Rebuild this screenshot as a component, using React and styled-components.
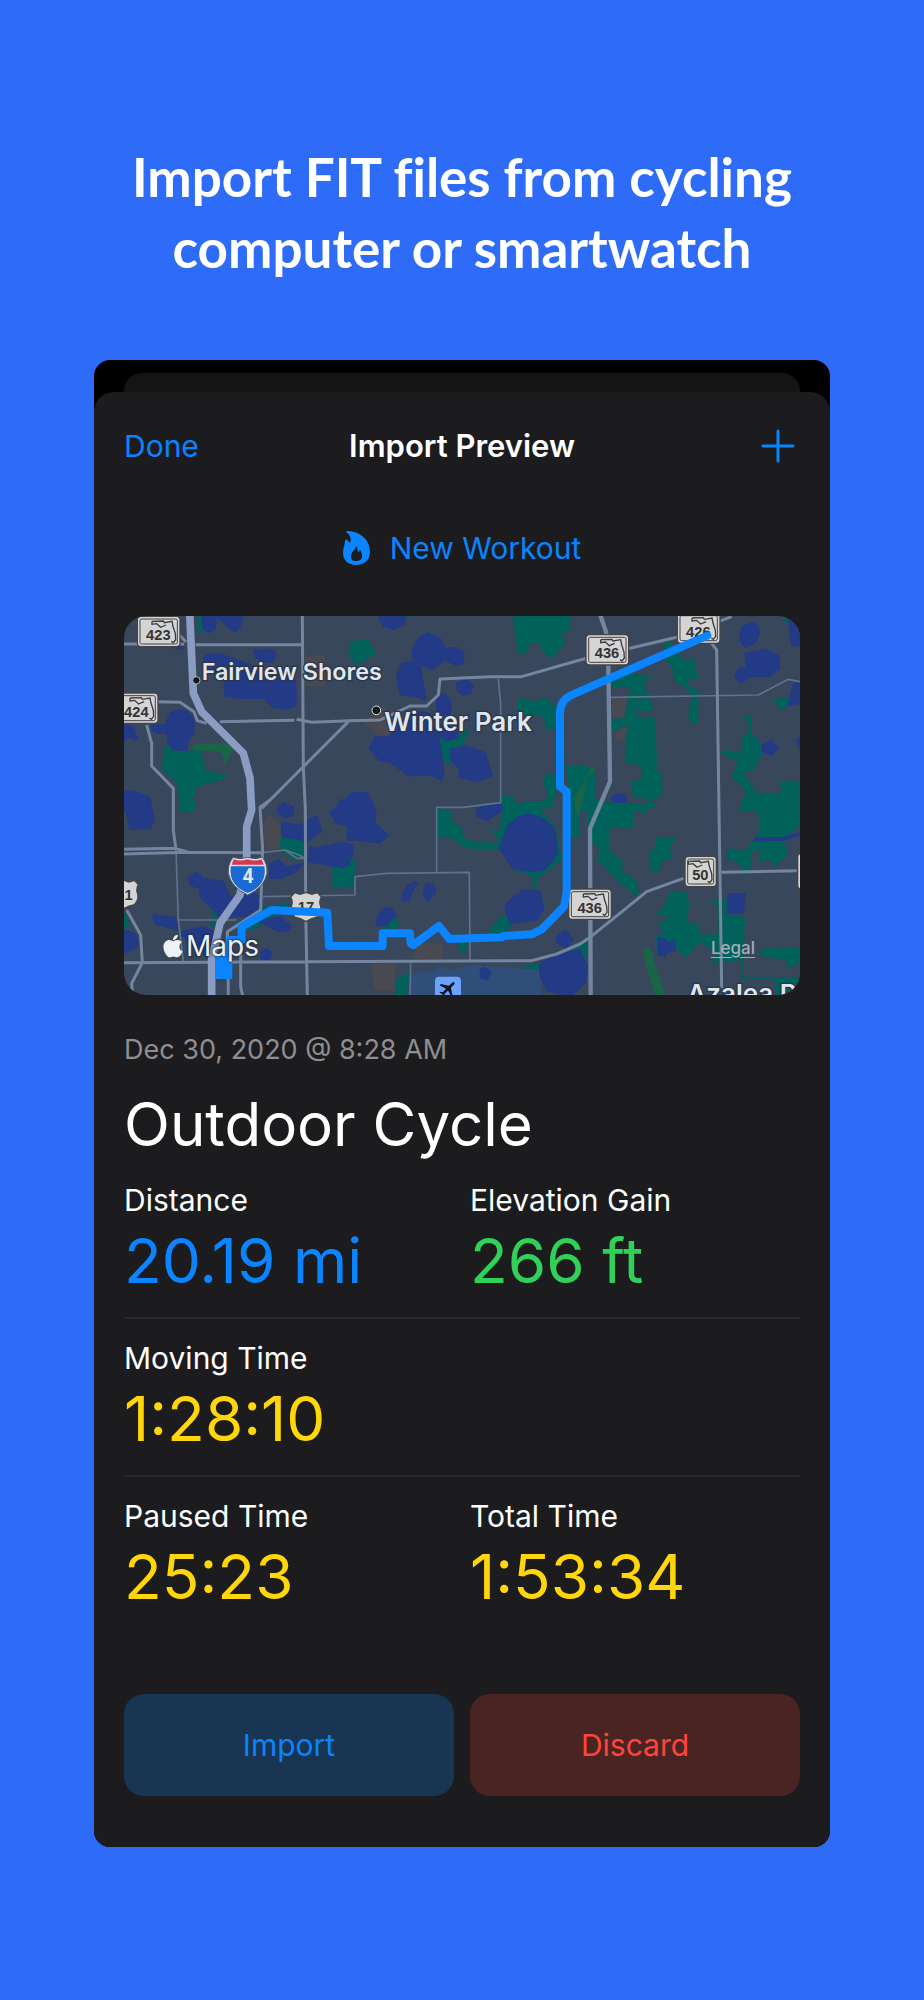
import React from "react";
import styled, { createGlobalStyle } from "styled-components";
import { FaApple } from "react-icons/fa";
import { MdFlight } from "react-icons/md";

const GlobalStyle = createGlobalStyle`
  * {
    box-sizing: border-box;
  }
  body {
    margin: 0;
    background: #2e6cf7;
    font-family: Inter, "Liberation Sans", sans-serif;
    color: #ffffff;
  }
`;

const Page = styled.main`
  display: flex;
  flex-direction: column;
  align-items: center;
  padding: 141px 94px 153px;
`;

const Headline = styled.h1`
  max-width: 700px;
  margin: 0 0 77px;
  font-family: Lato, "Liberation Sans", sans-serif;
  font-size: 53px;
  font-weight: 700;
  font-variant-ligatures: none;
  line-height: 71px;
  text-align: center;
`;

const Phone = styled.section`
  width: 100%;
  padding-top: 13px;
  border-radius: 16px;
  background: #000000;
  overflow: hidden;
`;

const BackSheet = styled.div`
  height: 19px;
  margin: 0 30px;
  border-radius: 18px 18px 0 0;
  background: #141415;
`;

const Sheet = styled.div`
  padding: 0 30px 51px;
  border-radius: 20px 20px 0 0;
  background: #1c1c1e;
`;

const NavBar = styled.header`
  display: grid;
  grid-template-columns: 1fr auto 1fr;
  align-items: center;
  height: 108px;
`;

const NavTitle = styled.h2`
  margin: 0;
  font-size: 31px;
  font-weight: 600;
  line-height: 40px;
`;

const TextButton = styled.button`
  display: flex;
  align-items: center;
  gap: 20px;
  justify-self: ${(props) => props.$side || "center"};
  padding: ${(props) => (props.$side === "end" ? "0 5px" : "0")};
  border: 0;
  background: none;
  color: #0a84ff;
  font: inherit;
  font-size: 30px;
  line-height: 40px;
  cursor: pointer;
`;

const WorkoutRow = styled.div`
  display: flex;
  justify-content: center;
  padding: 28px 0 48px;
`;

const MapCard = styled.div`
  position: relative;
  border-radius: 22px;
  background: #38475b;
  overflow: hidden;
`;

const MapCanvas = styled.svg`
  display: block;
  width: 100%;
  height: auto;
`;

const MapBrand = styled.span`
  position: absolute;
  left: 36px;
  bottom: 31px;
  display: flex;
  align-items: center;
  font-size: 28px;
  line-height: 36px;
  color: #eef1f5;
  text-shadow: 0 0 3px #1c2430, 0 0 2px #1c2430;
`;

const LegalLink = styled.a`
  position: absolute;
  right: 45px;
  bottom: 36px;
  font-size: 17px;
  font-weight: 500;
  line-height: 22px;
  color: #a3adba;
  text-decoration: underline;
  text-underline-offset: 3px;
`;

const DateLine = styled.p`
  margin: 37px 0 0;
  font-size: 27px;
  line-height: 36px;
  color: #8e8e93;
`;

const WorkoutTitle = styled.h3`
  margin: 18px 0 0;
  font-size: 60px;
  font-weight: 400;
  line-height: 76px;
`;

const Stats = styled.dl`
  margin: 18px 0 0;
`;

const StatRow = styled.div`
  display: grid;
  grid-template-columns: 1fr 1fr;
  column-gap: 16px;
  padding-bottom: 18px;
  margin-bottom: 19px;
  border-bottom: 2px solid ${(props) => (props.$last ? "transparent" : "#29292c")};
`;

const StatLabel = styled.dt`
  font-size: 30px;
  line-height: 40px;
`;

const StatValue = styled.dd`
  margin: 3px 0 0;
  font-size: 62px;
  line-height: 76px;
  color: ${(props) => props.$color};
`;

const Actions = styled.div`
  display: grid;
  grid-template-columns: 1fr 1fr;
  gap: 16px;
  padding-top: 40px;
`;

const ActionButton = styled.button`
  height: 102px;
  border: 0;
  border-radius: 20px;
  background: ${(props) => (props.$danger ? "#492423" : "#183553")};
  color: ${(props) => (props.$danger ? "#ff453a" : "#0a84ff")};
  font: inherit;
  font-size: 30px;
  cursor: pointer;
`;

const tiles = [
  {
    x: -12,
    y: -18,
    parks:
      "M232,18L250,18 252,62 232,70ZM285,18L297,18 293,40ZM135,405L175,425 220,420 240,415 260,485 318,490 318,505 232,530 222,560 228,602 180,602 172,520 125,480Z",
    woods: "M222,400L320,400 342,418 312,468 310,440 300,425 240,422 222,420Z",
    built: "M555,138H615V228H555Z",
    water:
      "M248,18L290,18 285,60 265,68 248,55ZM292,18L370,18 360,50 345,64 320,48ZM158,112L185,110 188,119 170,117ZM250,142C275,125 300,130 330,142L380,160 450,190 525,208 530,265 525,290 500,298 460,292 430,265 370,265 315,258 312,190 265,188ZM402,120L425,122 450,116 467,130 460,155 430,158 405,140ZM150,310C180,290 210,300 222,330L222,370 205,390 200,420 160,420 145,400 140,370 110,370 95,360 95,345 135,345ZM12,345L40,350 52,390 25,382 12,392ZM12,545C40,538 75,550 88,580L95,605H12Z",
  },
  {
    x: 648,
    y: -18,
    parks:
      "M30,95L82,86 110,130 50,165 26,140ZM520,18L692,18 690,65 660,70 677,98 632,147 605,120 600,98 568,98 562,130 532,132ZM540,262L580,275 615,262 650,290 650,355 620,358 610,320 545,315 530,290ZM290,380L350,385 392,345 370,405 340,410 335,455 318,463 300,420ZM195,18L215,18 205,24ZM622,485L645,500 650,545 640,575 600,602 490,602 480,560 518,555 522,580 610,572 625,555 608,515ZM678,468H740V598H690Z",
    woods: "",
    built: "M70,340L130,280 150,320 200,340 205,370 155,385 115,375Z",
    water:
      "M115,18L198,18 192,45 160,58 130,48ZM235,85L262,68 300,85 318,115 350,112 372,130 370,160 350,166 315,150 275,180 255,168 220,150 217,120ZM185,160L210,155 240,160 248,210 258,270 235,262 180,252 170,195ZM350,218L380,208 400,226 392,250 370,256 352,243ZM290,255L315,252 333,277 330,317 290,317ZM170,340L235,305 270,310 285,350 300,400 312,490 305,510 270,495 205,497 150,455 118,450 88,415 105,382 150,378ZM330,420L375,408 435,428 457,498 405,515 355,500 360,475 335,455ZM290,340L355,350 350,385 320,392 295,375ZM-14,595L40,548 80,548 108,605 0,640Z",
  },
  {
    x: 1338,
    y: -18,
    parks:
      "M280,98L300,95 340,150 372,145 385,208 350,208 360,232 385,240 385,340 370,345 355,325 358,285 370,260 340,228 315,215 305,170 280,140ZM125,205L180,190 245,198 220,220 248,285 245,307 190,300 205,320 253,322 262,460 265,488 285,488 272,500 280,545 255,570 190,562 185,515 215,505 212,465 168,460 165,380 180,345 125,365 125,330 165,320 180,230 125,235ZM608,270L628,260 658,265 653,288 630,298ZM515,318L543,315 545,370 570,395 575,435 550,482 520,488 528,500 560,548H632V515H690V605H507L528,545 485,500 505,455 470,440 450,430 470,418 512,430 515,385 535,365 535,335ZM0,468L77,475 75,560 90,575 180,578 220,585 240,570 260,590 200,605 0,605ZM637,18L652,18 650,45Z",
    woods: "M66,470H77V485L50,500 36,590 14,590 14,560Z",
    built: "M125,265L172,265 160,330 127,318ZM148,343L175,355 165,392 132,390Z",
    water:
      "M515,50L550,35 570,60 560,95 525,112 508,90ZM525,130L590,118 628,140 628,175 600,198 540,200 515,218 495,200 505,175 530,172ZM655,25H690V110L665,105ZM670,222L690,218V280L655,285ZM575,408L600,391 625,413 605,435 580,427ZM678,390L690,380V418ZM122,565L145,550 170,560 168,575 140,577Z",
  },
  {
    x: -12,
    y: 552,
    parks:
      "M180,0L225,0 210,38 178,35ZM480,115L550,112 565,175 520,180 480,150ZM637,195H697V263H637ZM12,330L30,370 12,392ZM262,300L300,290 320,340 280,355ZM265,372L292,358 290,385ZM430,320L500,310 510,320 400,390 380,385Z",
    woods: "",
    built: "M430,75L448,38 480,80 485,120 475,150 440,148 430,120Z",
    water:
      "M15,-24L88,-10 103,60 90,85 30,88 20,40ZM470,30L490,8 520,20 520,45 495,55ZM485,68L540,75 590,48 605,95 560,125 520,115 485,110ZM630,40L660,10 700,0V75L650,70ZM570,140L600,148 680,130 690,195 650,200 600,190 565,185ZM450,190L475,180 500,200 550,190 530,215 480,235 450,235ZM205,235L230,215 250,235 310,245 330,290 400,275 420,290 415,340 370,350 300,350 270,320 240,290 240,265 210,255ZM98,345L165,352 175,390 105,372ZM12,390L45,400 55,425 50,440 12,460ZM180,395L250,380 290,400 260,470 200,420ZM420,365L480,350 515,380 500,395 475,395ZM420,460L438,445 455,457 450,480 425,480Z",
  },
  {
    x: 648,
    y: 552,
    parks:
      "M293,25L330,28 335,60 370,90 375,120 475,130 470,105 445,90 480,92 485,40 490,-5 522,-5 530,18 600,5 640,0 640,20 600,28 620,48 650,90 665,180 600,230 592,232 590,268 578,268 578,230 520,208 480,150 375,145 335,115 293,112ZM440,400L485,345 520,370 495,400ZM130,388L165,335 178,385ZM355,425L385,425 375,460 360,455ZM5,178H47V264H-10ZM550,500L610,485 600,515 555,515ZM165,540L210,515 200,585 165,585ZM688,40L720,20V110L695,115Z",
    woods: "",
    built: "M235,430L310,430 308,478 215,475ZM95,490H165V575L100,570Z",
    water:
      "M0,0L95,0 107,40 105,70 145,105 120,130 50,120 22,120 22,75 0,72ZM-90,150L0,128 38,135 38,165 10,205 -5,195ZM410,25L480,5 488,30 440,62 412,50ZM505,75L535,50 565,42 610,55 645,90 653,160 615,208 580,215 520,205 478,145ZM500,310L550,270 600,275 612,325 590,360 510,370 495,330ZM258,250L280,255 288,275 265,305 250,285ZM185,285L205,255 225,245 233,252 215,275 210,298 190,302ZM107,365L125,330 150,322 168,345 140,375 115,378ZM650,410L675,390 700,418 678,443 650,428ZM600,490L650,465 720,450 742,500 735,550 690,590 620,570 600,525ZM420,510L435,502 452,514 442,539 424,534Z",
  },
  {
    x: 1338,
    y: 552,
    parks:
      "M50,30L190,10 190,85 130,80 118,90 118,150 160,185 155,215 200,240 208,295 140,240 80,180 90,150 60,120ZM190,15L250,5 250,18 232,25 225,48 208,28ZM255,112H322L300,145 305,175 272,185 270,215 238,210 238,150 255,148ZM510,5L545,-20H690V80L660,95 660,125 640,125 655,160 620,200 600,180 560,185 575,150 545,155 540,225 515,225 512,195 465,170 480,145 530,150 550,120 570,95 565,40ZM300,275L350,275 358,315 350,365 390,375 388,430 345,475 320,445 260,460 258,410 275,400 270,370 300,350 258,345 285,315ZM405,305L470,295 470,345 525,350 520,480 425,490 440,460 390,425 385,405 445,400 445,310ZM565,455L600,440 640,445 690,440V490L650,505 650,480 580,470ZM515,480H522V533H690V585H620L615,540H515ZM0,440L55,420 50,475 30,470Z",
    woods: "M220,445L240,442 285,585 255,585 225,490ZM14,0H36L28,45 14,30Z",
    built: "",
    water:
      "M475,282H525L520,340H472ZM265,412L285,417 290,427 315,422V452L290,457 285,469 265,464ZM555,115L640,112 690,98V105L640,120 555,122ZM130,0H165V6H130Z",
  },
];

const highway =
  "M197,-10L208,232 233,287 358,412 378,487 383,582 368,632 368,722 348,837 288,922 263,1032 263,1150";

const mainRoads = [
  "M0,84H180",
  "M215,86H535",
  "M150,40L186,78",
  "M535,0L538,452 544,582 545,882 550,1140",
  "M98,257L168,259 210,287 220,314 248,322",
  "M288,317L511,313",
  "M518,310L563,319 678,314 768,312 858,270 908,270 943,237 948,189 1098,182 1193,182 1368,132 1658,64 1823,2",
  "M673,317L413,577",
  "M438,552L408,574 416,702 410,882 310,947 313,1140",
  "M68,327L83,382 83,450 148,517 148,642 156,702",
  "M0,700L153,697 198,710",
  "M0,714L188,709 413,710",
  "M0,1040L1223,1034 1298,1014 1368,984 1398,964 1568,827 1678,787",
  "M1793,769L2018,764",
  "M8,882L50,957 55,1040 23,1102 26,1140",
  "M350,952L350,1112 356,1140",
  "M1763,82L1778,102 1785,582 1793,1117",
];

const thinRoads = [
  "M156,702L163,912 178,1037",
  "M163,912H338",
  "M413,710L483,702 518,727 543,727",
  "M483,702L520,715 543,727",
  "M418,842L693,837 693,782 788,772 1036,769 1038,1032",
  "M1123,189L1130,262 1130,560 1018,574 938,574 938,770",
  "M1458,244L1903,237 1993,190 2028,197",
  "M860,1042L858,1140",
];

const route =
  "M1750,59L1345,236Q1308,252 1308,292L1308,512 1328,527 1328,827 1320,872 1253,940 1223,955 1138,960 1133,964 976,969 945,930 868,987 860,982 858,952 776,952 776,990 615,990 610,890 443,882 353,932 353,972 318,972 300,1030";

const MapLabel = styled.text`
  font-family: Inter, "Liberation Sans", sans-serif;
  font-weight: 600;
  fill: #dfe6ef;
  stroke: #2b3647;
  stroke-width: 8px;
  paint-order: stroke;
`;

const ShieldNumber = styled.text`
  font-family: "Liberation Sans Narrow", "Liberation Sans", sans-serif;
  font-size: 44px;
  font-weight: 700;
  text-anchor: middle;
  fill: #333333;
`;

function StateShield({ x, y, number, width = 132 }) {
  return (
    <g transform={`translate(${x} ${y})`}>
      <rect width={width} height="95" rx="13" fill="#444444" />
      <rect x="4" y="4" width={width - 8} height="87" rx="9" fill="#d4d4d4" />
      <rect
        x="10"
        y="10"
        width={width - 20}
        height="75"
        rx="5"
        fill="none"
        stroke="#444444"
        strokeWidth="3"
      />
      <path
        transform={`translate(${width - 132} 0)`}
        d="M46,17L80,16 83,21 106,17 109,32 116,54 117,72 110,81 104,77M46,17V26L60,24 72,35 88,28"
        fill="none"
        stroke="#3c3c3c"
        strokeWidth="4"
      />
      <ShieldNumber x={width / 2 - 1} y="73">
        {number}
      </ShieldNumber>
    </g>
  );
}

function UsShield({ x, y, number, numberX = 48 }) {
  return (
    <g transform={`translate(${x} ${y})`}>
      <path
        d="M14,3L30,8 48,2 66,8 82,3 94,16Q86,30 92,44 96,62 82,76 62,80 48,90 34,80 14,76 0,62 4,44 10,30 2,16Z"
        fill="#d4d4d4"
        stroke="#444444"
        strokeWidth="4"
      />
      <ShieldNumber x={numberX} y="61">
        {number}
      </ShieldNumber>
    </g>
  );
}

function InterstateShield() {
  return (
    <g transform="translate(313 722)">
      <path
        d="M14,2Q36,10 58,2 80,10 102,2 118,22 116,50 108,92 58,115 8,92 0,50 -2,22 14,2Z"
        fill="#d8dde6"
        stroke="#4c5878"
        strokeWidth="3"
      />
      <path d="M16,8Q36,15 58,8 80,15 100,8L106,24H10Z" fill="#d5394c" />
      <path d="M8,29H108Q112,50 104,70 92,96 58,109 24,96 12,70 4,50 8,29Z" fill="#1a6ad4" />
      <text
        x="59"
        y="79"
        textAnchor="middle"
        fontFamily="Roboto, sans-serif"
        fontSize="58"
        fontWeight="700"
        fill="#e3e6ea"
      >
        4
      </text>
    </g>
  );
}

function RouteMap() {
  return (
    <MapCard>
      <MapCanvas viewBox="0 0 2028 1137" role="img" aria-label="Route map">
        {tiles.map((tile, index) => (
          <g key={index} transform={`translate(${tile.x} ${tile.y})`}>
            <path d={tile.built} fill="#494951" />
            <path d={tile.parks} fill="#00625a" />
            <path d={tile.woods} fill="#1a6548" />
          </g>
        ))}
        <path
          d="M863,1072L938,1062 943,1047 973,1062 1048,1047 1123,1052 1250,1062V1140H858Z"
          fill="#304e7a"
        />
        {tiles.map((tile, index) => (
          <path
            key={index}
            transform={`translate(${tile.x} ${tile.y})`}
            d={tile.water}
            fill="#233a87"
            stroke="#233a87"
            strokeWidth="4"
            strokeLinejoin="round"
          />
        ))}
        <g fill="none" strokeLinejoin="round">
          <path d={thinRoads.join("")} stroke="#60718a" strokeWidth="5" />
          <path d={mainRoads.join("")} stroke="#74869f" strokeWidth="9" />
          <path
            d="M1428,-5L1446,47 1453,152 1458,497 1398,637 1400,1140"
            stroke="#74869f"
            strokeWidth="13"
          />
          <path d={highway} stroke="#8a9cc2" strokeWidth="23" />
        </g>
        <StateShield x={38} y={-1} number="423" />
        <StateShield x={-28} y={229} number="424" />
        <StateShield x={1384} y={54} number="436" />
        <StateShield x={1658} y={-11} number="426" />
        <StateShield x={1332} y={817} number="436" />
        <StateShield x={1681} y={719} number="50" width={98} />
        <rect x="2021" y="712" width="90" height="108" rx="12" fill="#d4d4d4" stroke="#444444" strokeWidth="4" />
        <UsShield x={-51} y={790} number="1" numberX={65} />
        <UsShield x={498} y={827} number="17" />
        <InterstateShield />
        <rect x="933" y="1082" width="78" height="78" rx="12" fill="#6ba1ff" />
        <g transform="rotate(45 973 1119)">
          <MdFlight x="941" y="1087" size="64" color="#11151c" />
        </g>
        <path
          d={route}
          fill="none"
          stroke="#0a84ff"
          strokeWidth="24"
          strokeLinecap="round"
          strokeLinejoin="round"
        />
        <path d="M275,1020H300V1040H322V1086H279Z" fill="#0a84ff" stroke="#0a84ff" strokeWidth="6" strokeLinejoin="round" />
        <circle cx="217" cy="193" r="11" fill="#12151b" stroke="#aab6c6" strokeWidth="3" />
        <circle cx="757" cy="283" r="13" fill="#12151b" stroke="#dfe6ef" strokeWidth="3" />
        <MapLabel x="233" y="192" fontSize="70">
          Fairview Shores
        </MapLabel>
        <MapLabel x="781" y="344" fontSize="78">
          Winter Park
        </MapLabel>
        <MapLabel x="1690" y="1160" fontSize="78">
          Azalea Park
        </MapLabel>
      </MapCanvas>
      <MapBrand>
        <FaApple size={26} />
        Maps
      </MapBrand>
      <LegalLink href="#legal">Legal</LegalLink>
    </MapCard>
  );
}

const FlameIcon = () => (
  <svg width="27" height="34" viewBox="0 0 27 34" aria-hidden="true">
    <path
      d="M4,0C17,0 27,9 27,21C27,29 21,34 13,34C5,34 0,29 0,22C0,17 2,14 2,10C2,8 4,8 5,10L7,12C9,8 7,4 4,2C3,1 3,0 4,0ZM13,15C13,19 8,20 8,26C8,29 10,30 13,30C17,30 19,28 19,25C19,22 18,20 17,19C16,20 16,21 15,21C14,19 15,17 13,15Z"
      fill="currentColor"
      fillRule="evenodd"
    />
  </svg>
);

const PlusIcon = () => (
  <svg width="34" height="34" viewBox="0 0 34 34" aria-hidden="true">
    <path d="M17,2V32M2,17H32" stroke="currentColor" strokeWidth="3" strokeLinecap="round" />
  </svg>
);

const rows = [
  [
    { label: "Distance", value: "20.19 mi", color: "#0a84ff" },
    { label: "Elevation Gain", value: "266 ft", color: "#30d158" },
  ],
  [{ label: "Moving Time", value: "1:28:10", color: "#ffd60a" }],
  [
    { label: "Paused Time", value: "25:23", color: "#ffd60a" },
    { label: "Total Time", value: "1:53:34", color: "#ffd60a" },
  ],
];

function App() {
  return (
    <Page>
      <GlobalStyle />
      <Headline>Import FIT files from cycling computer or smartwatch</Headline>
      <Phone>
        <BackSheet />
        <Sheet>
          <NavBar>
            <TextButton $side="start">Done</TextButton>
            <NavTitle>Import Preview</NavTitle>
            <TextButton $side="end" aria-label="Add">
              <PlusIcon />
            </TextButton>
          </NavBar>
          <WorkoutRow>
            <TextButton>
              <FlameIcon />
              New Workout
            </TextButton>
          </WorkoutRow>
          <RouteMap />
          <DateLine>Dec 30, 2020 @ 8:28 AM</DateLine>
          <WorkoutTitle>Outdoor Cycle</WorkoutTitle>
          <Stats>
            {rows.map((row, index) => (
              <StatRow key={index} $last={index === rows.length - 1}>
                {row.map((stat) => (
                  <div key={stat.label}>
                    <StatLabel>{stat.label}</StatLabel>
                    <StatValue $color={stat.color}>{stat.value}</StatValue>
                  </div>
                ))}
              </StatRow>
            ))}
          </Stats>
          <Actions>
            <ActionButton>Import</ActionButton>
            <ActionButton $danger>Discard</ActionButton>
          </Actions>
        </Sheet>
      </Phone>
    </Page>
  );
}

export default App;
